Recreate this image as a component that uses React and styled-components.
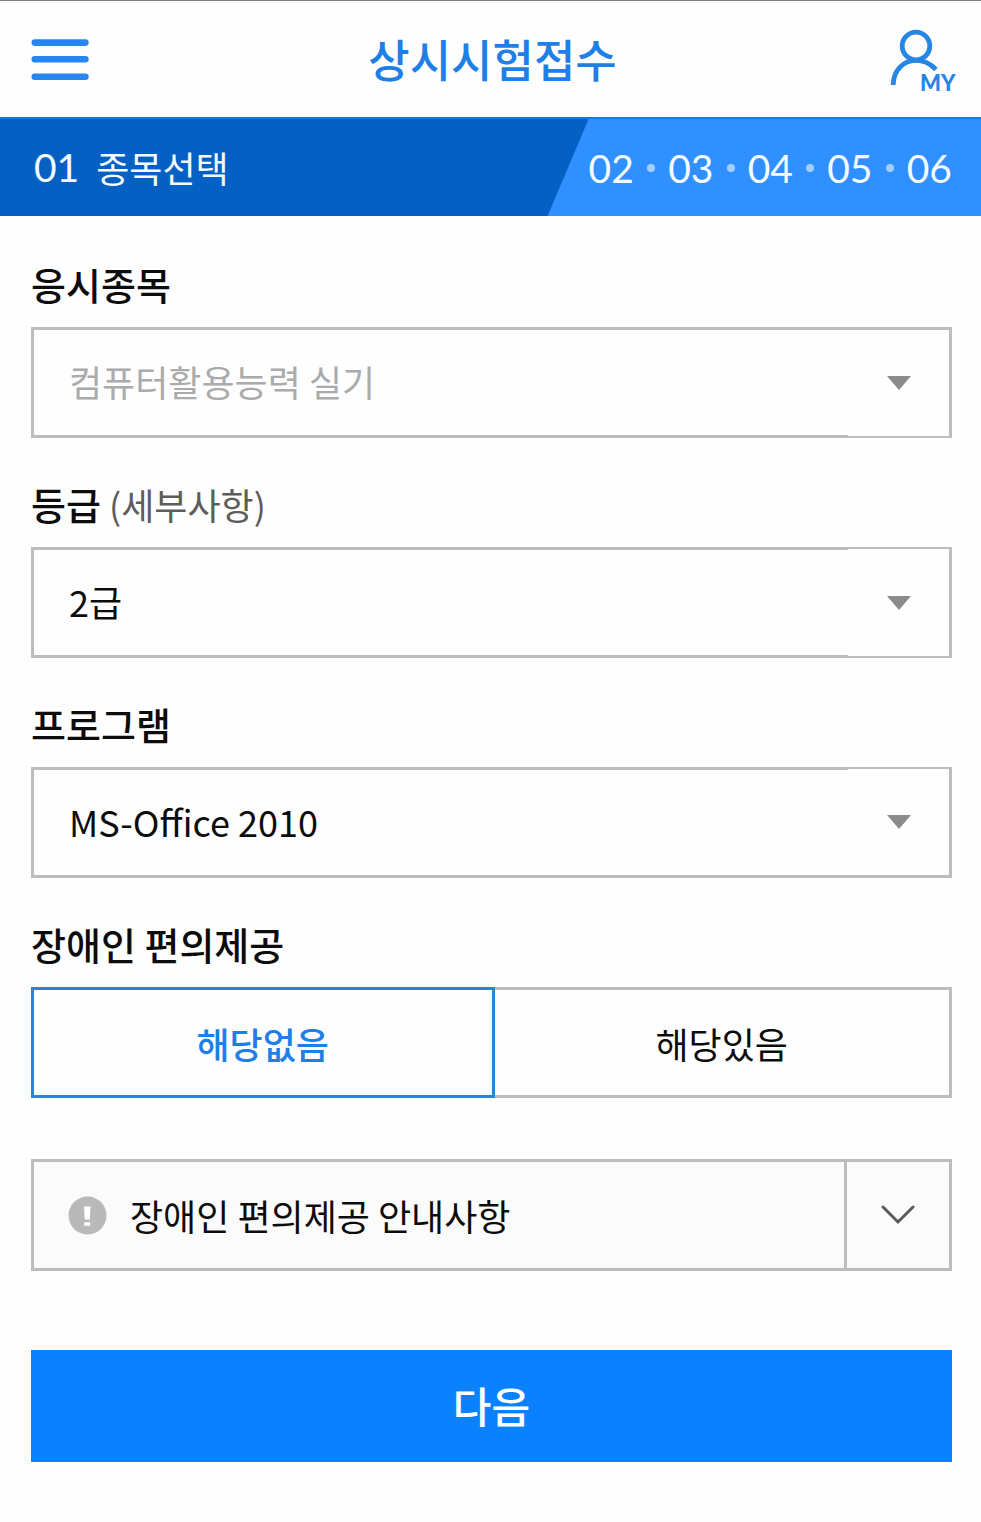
import React, { useState } from "react";
import styled, { createGlobalStyle } from "styled-components";

const GlobalStyle = createGlobalStyle`
  *, *::before, *::after { box-sizing: border-box; }
  body {
    margin: 0;
    background: #fefefe;
    color: #0c0c0c;
    font-family: "Noto Sans CJK KR", "Noto Sans", sans-serif;
    font-size: 36px;
  }
  button, select, input { font: inherit; color: inherit; }
`;

const Header = styled.header`
  display: grid;
  grid-template-columns: 70px 1fr 75px;
  align-items: center;
  height: 117px;
  padding: 0 22px 0 31px;
  border-top: 1px solid #7f7f84;
`;

const IconButton = styled.button`
  display: flex;
  padding: 0;
  border: 0;
  background: none;
  cursor: pointer;
`;

const IconLink = styled.a`
  display: flex;
  justify-content: flex-end;
`;

const Title = styled.h1`
  margin: 0;
  text-align: center;
  font-size: 45px;
  font-weight: 500;
  line-height: 66px;
  color: #1e7fe6;
`;

const Stepper = styled.nav`
  display: flex;
  height: 99px;
  border-top: 2px solid #1c78d8;
  background: #3190ff;
  color: #f4fcff;
`;

const CurrentStep = styled.div`
  display: flex;
  align-items: center;
  gap: 17px;
  width: 60%;
  padding: 0 0 2px 34px;
  background: #0560c4;
  clip-path: polygon(0 0, 100% 0, calc(100% - 41px) 100%, 0 100%);
`;

const StepNumber = styled.span`
  font-family: Lato, sans-serif;
  font-size: 39px;
  line-height: 48px;
`;

const NextSteps = styled.ol`
  display: flex;
  flex: 1;
  align-items: center;
  justify-content: space-between;
  margin: 0;
  padding: 0 29px 0 0;
  list-style: none;
`;

const NextStep = styled.li`
  display: flex;
`;

const Dot = styled.li`
  width: 8px;
  height: 8px;
  border-radius: 50%;
  background: #a3d0ff;
`;

const Form = styled.form`
  padding: 40px 29px 60px 31px;
`;

const Field = styled.div`
  margin-bottom: 38px;
`;

const Label = styled.label`
  display: block;
  margin-bottom: 15px;
  font-size: 38px;
  font-weight: 500;
  line-height: 56px;
`;

const LabelNote = styled.span`
  font-size: 36px;
  font-weight: 400;
  color: #5c5c5c;
`;

const SelectWrap = styled.div`
  position: relative;
`;

const Select = styled.select`
  display: block;
  width: 100%;
  height: 111px;
  padding: 0 120px 3px 35px;
  border: 3px solid #bdbdbd;
  border-radius: 0;
  background: #fefefe;
  appearance: none;

  &:disabled {
    color: #ababab;
    opacity: 1;
  }
`;

const SelectArrow = styled.span`
  position: absolute;
  top: ${(p) => (p.$coverTop ? 2 : 3)}px;
  right: 3px;
  bottom: ${(p) => (p.$coverBottom ? 2 : 3)}px;
  display: flex;
  align-items: center;
  justify-content: center;
  width: 101px;
  background: #fefefe;
  pointer-events: none;
`;

const Choices = styled.fieldset`
  display: grid;
  grid-template-columns: 1fr 1fr;
  min-width: 0;
  margin: 0 0 61px;
  padding: 0;
  border: 0;
`;

const ChoicesTitle = styled(Label).attrs({ as: "legend" })`
  padding: 0;
`;

const Choice = styled.label`
  position: relative;
  display: flex;
  align-items: center;
  justify-content: center;
  height: 111px;
  border: 3px solid #bdbdbd;
  cursor: pointer;

  &:first-of-type { margin-right: -3px; }

  &:has(input:checked) {
    z-index: 1;
    border-color: #2a84d8;
    color: #1e7fe6;
    font-weight: 500;
  }
`;

const HiddenRadio = styled.input`
  position: absolute;
  inset: 0;
  width: 100%;
  height: 100%;
  margin: 0;
  opacity: 0;
  cursor: pointer;
`;

const Notice = styled.button`
  display: flex;
  align-items: stretch;
  width: 100%;
  height: 112px;
  margin-bottom: 79px;
  padding: 0;
  border: 3px solid #bdbdbd;
  background: #fbfbfb;
  text-align: left;
  cursor: pointer;
`;

const NoticeText = styled.span`
  display: flex;
  flex: 1;
  align-items: center;
  gap: 23px;
  padding-left: 34px;
`;

const NoticeToggle = styled.span`
  display: flex;
  align-items: center;
  justify-content: center;
  width: 105px;
  border-left: 3px solid #bdbdbd;
`;

const Submit = styled.button`
  display: block;
  width: 100%;
  height: 112px;
  padding: 0 0 4px;
  border: 0;
  background: #0a82ff;
  color: #fff;
  font-size: 42px;
  font-weight: 500;
  cursor: pointer;
`;

const MenuIcon = () => (
  <svg width="58" height="44" viewBox="0 0 58 44" aria-hidden="true">
    <g stroke="#2785ee" strokeWidth="6.6" strokeLinecap="round">
      <path d="M3.8 5.6H54.4M3.8 22.3H54.4M3.8 39.8H54.4" />
    </g>
  </svg>
);

const MyIcon = () => (
  <svg width="70" height="76" viewBox="0 -7 70 76" aria-hidden="true">
    <g fill="none" stroke="#2785e6" strokeWidth="4.8">
      <circle cx="27" cy="18" r="13.8" />
      <path d="M4.2 57C4.2 43 14 32.4 27 32.4C34.5 32.4 41.5 35.8 47 41.5" />
    </g>
    <text x="31" y="63" fill="#2785e6" fontFamily="Lato, sans-serif" fontSize="22" fontWeight="900">
      MY
    </text>
  </svg>
);

const Triangle = () => (
  <svg width="24" height="14" viewBox="0 0 24 14" aria-hidden="true">
    <path d="M0 0H24L12 14Z" fill="#8b8b8b" />
  </svg>
);

const AlertIcon = () => (
  <svg width="39" height="39" viewBox="0 0 39 39" aria-hidden="true">
    <circle cx="19.5" cy="19.5" r="19" fill="#b9b9b9" />
    <path d="M16 10.5H22.5L21.8 23.5H16.7ZM16.2 26.2H22.2V29.8H16.2Z" fill="#fff" />
  </svg>
);

const ChevronIcon = () => (
  <svg width="34" height="20" viewBox="0 0 34 20" aria-hidden="true">
    <path d="M2 2L17 17L32 2" fill="none" stroke="#5a5a5a" strokeWidth="3" strokeLinecap="round" />
  </svg>
);

const FIELDS = [
  { id: "subject", label: "응시종목", value: "컴퓨터활용능력 실기", disabled: true, coverBottom: true },
  { id: "grade", label: "등급", note: "(세부사항)", value: "2급", coverTop: true, coverBottom: true },
  { id: "program", label: "프로그램", value: "MS-Office 2010", coverTop: true },
];

const NEXT_STEPS = ["02", "03", "04", "05", "06"];
const SUPPORT = ["해당없음", "해당있음"];

export default function App() {
  const [support, setSupport] = useState(SUPPORT[0]);

  return (
    <>
      <GlobalStyle />
      <Header>
        <IconButton type="button" aria-label="메뉴">
          <MenuIcon />
        </IconButton>
        <Title>상시시험접수</Title>
        <IconLink href="#my" aria-label="MY">
          <MyIcon />
        </IconLink>
      </Header>
      <Stepper>
        <CurrentStep aria-current="step">
          <StepNumber>01</StepNumber>
          <span>종목선택</span>
        </CurrentStep>
        <NextSteps>
          {NEXT_STEPS.map((step, i) => (
            <React.Fragment key={step}>
              {i > 0 && <Dot aria-hidden="true" />}
              <NextStep>
                <StepNumber>{step}</StepNumber>
              </NextStep>
            </React.Fragment>
          ))}
        </NextSteps>
      </Stepper>
      <Form onSubmit={(e) => e.preventDefault()}>
        {FIELDS.map((f) => (
          <Field key={f.id}>
            <Label htmlFor={f.id}>
              {f.label}
              {f.note && <LabelNote> {f.note}</LabelNote>}
            </Label>
            <SelectWrap>
              <Select id={f.id} disabled={f.disabled}>
                <option>{f.value}</option>
              </Select>
              <SelectArrow $coverTop={f.coverTop} $coverBottom={f.coverBottom}>
                <Triangle />
              </SelectArrow>
            </SelectWrap>
          </Field>
        ))}
        <Choices>
          <ChoicesTitle>장애인 편의제공</ChoicesTitle>
          {SUPPORT.map((name) => (
            <Choice key={name}>
              <HiddenRadio
                type="radio"
                name="support"
                checked={support === name}
                onChange={() => setSupport(name)}
              />
              {name}
            </Choice>
          ))}
        </Choices>
        <Notice type="button" aria-expanded="false">
          <NoticeText>
            <AlertIcon />
            장애인 편의제공 안내사항
          </NoticeText>
          <NoticeToggle>
            <ChevronIcon />
          </NoticeToggle>
        </Notice>
        <Submit type="submit">다음</Submit>
      </Form>
    </>
  );
}
